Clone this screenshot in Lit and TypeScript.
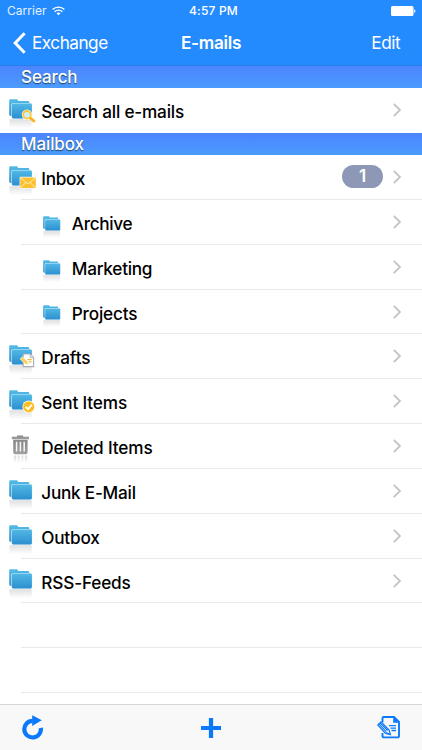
import { LitElement, html, svg, css, nothing } from "lit";
import { customElement, property } from "lit/decorators.js";

type Badge = "search" | "mail" | "draft" | "check" | "none";
type Icon = Badge | "trash";
interface Item { label: string; icon: Icon; sub?: boolean; count?: number; spacing: number; }

const search: Item[] = [{ label: "Search all e-mails", icon: "search", spacing: -0.2 }];
const mailbox: Item[] = [
  { label: "Inbox", icon: "mail", count: 1, spacing: -0.3 },
  { label: "Archive", icon: "none", sub: true, spacing: -0.33 },
  { label: "Marketing", icon: "none", sub: true, spacing: -0.27 },
  { label: "Projects", icon: "none", sub: true, spacing: -0.2 },
  { label: "Drafts", icon: "draft", spacing: -0.06 },
  { label: "Sent Items", icon: "check", spacing: -0.15 },
  { label: "Deleted Items", icon: "trash", spacing: -0.15 },
  { label: "Junk E-Mail", icon: "none", spacing: -0.25 },
  { label: "Outbox", icon: "none", spacing: -0.22 },
  { label: "RSS-Feeds", icon: "none", spacing: -0.17 },
];

const badges: Record<Badge, unknown> = {
  none: nothing,
  search: svg`
    <path d="M21 18.2 25 22" stroke="#fff" stroke-width="4.2" stroke-linecap="round"/>
    <circle cx="18" cy="15.8" r="5.2" fill="#fff"/>
    <path d="M21.2 18.8 24.8 22" stroke="#f6b421" stroke-width="3" stroke-linecap="round"/>
    <circle cx="18" cy="15.8" r="3.8" fill="#d3eef8" stroke="#fbc938" stroke-width="1.8"/>`,
  mail: svg`
    <rect x="10.6" y="10.8" width="16.6" height="11.6" rx="1.2" fill="#fff"/>
    <rect x="11.2" y="11.5" width="15.6" height="10.4" rx="1" fill="#fcbf2d"/>
    <path d="M11.8 12.2 19 17.8 26.2 12.2M11.8 21.4 17 16.5M26.2 21.4 21 16.5" fill="none" stroke="#fff3cf" stroke-width=".9"/>`,
  draft: svg`
    <path d="M14.2 9h7l3.4 3.4v9.2h-10.4z" fill="#fff" stroke="#a9adb2" stroke-width="1.1"/>
    <path d="M21.2 9.2v3.4h3.2" fill="#e5e5e5" stroke="#a9adb2" stroke-width=".8"/>
    <path d="M11 14 13.6 11.6 18.8 16.8 19.4 19.8 16.2 19z" fill="#fbd064" stroke="#fff" stroke-width=".5"/>
    <path d="M18.4 14.6h4.4M19.8 16.9h2.6" stroke="#f4b942" stroke-width="1.3"/>`,
  check: svg`
    <circle cx="19.7" cy="16.8" r="6.3" fill="#fff"/>
    <circle cx="19.7" cy="16.8" r="5.6" fill="#fdbf24"/>
    <path d="M16.7 17 19.1 19.2 22.9 14.7" fill="none" stroke="#fff" stroke-width="1.8"/>`,
};

@customElement("mail-icon")
class MailIcon extends LitElement {
  @property() kind: Icon = "none";
  @property({ type: Boolean }) small = false;
  static styles = css`
    :host { display: block; }
    svg { display: block; overflow: visible; }
  `;
  render() {
    if (this.kind === "trash") return html`
      <svg width="24" height="30" viewBox="0 0 24 30">
        <defs>
          <linearGradient id="m" x1="0" y1="0" x2="0" y2="1"><stop stop-color="#888"/><stop offset="1" stop-color="#a0a0a0"/></linearGradient>
          <linearGradient id="r" x1="0" y1="0" x2="0" y2="1"><stop stop-color="#dadada"/><stop offset="1" stop-color="#fff"/></linearGradient>
        </defs>
        <path d="M8 .6h6.2v1.2H20v2.4H2.8V1.8H8z" fill="url(#m)"/>
        <path d="M4.2 4.8h14.4v12.6a1.8 1.8 0 0 1-1.8 1.8H6a1.8 1.8 0 0 1-1.8-1.8z" fill="url(#m)"/>
        <path d="M7.6 6.8v9.7M11.4 6.8v9.7M15.2 6.8v9.7" stroke="#f7f7f7" stroke-width="1.5"/>
        <path d="M4.8 20.5h2.4v8H4.8zM8.7 20.5h1.9v8H8.7zM12.4 20.5h1.9v8h-1.9zM15.9 20.5h2.3v8h-2.3z" fill="url(#r)"/>
      </svg>`;
    return html`
      <svg width=${this.small ? 18 : 24} height=${this.small ? 22.5 : 30} viewBox="0 0 24 30">
        <defs>
          <linearGradient id="b" x1="0" y1="0" x2="0" y2="1"><stop stop-color="#55bbe6"/><stop offset="1" stop-color="#2f94cf"/></linearGradient>
          <linearGradient id="f" x1="0" y1="0" x2="0" y2="1"><stop stop-color="#51b8e6"/><stop offset="1" stop-color="#2d8fcf"/></linearGradient>
          <linearGradient id="r" x1="0" y1="0" x2="0" y2="1"><stop stop-color="#dedfe1"/><stop offset="1" stop-color="#fff"/></linearGradient>
        </defs>
        <path d="M.4 20.2h22.4v9H.4z" fill="url(#r)"/>
        <path d="M.2 1.2A1 1 0 0 1 1.2.2h6.8l1.4 1.7h9.8a1 1 0 0 1 1 1v14H1.8a1.6 1.6 0 0 1-1.6-1.6z" fill="url(#b)"/>
        <rect x="2.3" y="3.9" width="21" height="15.9" rx="1.8" fill="#d9f1fa"/>
        <rect x="2.9" y="4.6" width="20" height="14.8" rx="1.3" fill="url(#f)"/>
        ${badges[this.kind]}
      </svg>`;
  }
}

@customElement("app-root")
class AppRoot extends LitElement {
  static styles = css`
    :host { display: flex; flex-direction: column; width: 422px; height: 750px; overflow: hidden;
      background: #fff; font-family: Inter, "Liberation Sans", sans-serif; color: #000; }
    svg { display: block; flex: none; }
    header { flex: none; height: 65.5px; background: #248bff; color: #fff; box-sizing: border-box; border-bottom: 1px solid #287fe9; }
    .status, .nav { display: grid; grid-template-columns: 1fr auto 1fr; align-items: center; }
    .status { height: 21px; padding: 1px 6px 0 7px; box-sizing: border-box; font-size: 12px; line-height: 20px; }
    .carrier { display: flex; align-items: center; gap: 5px; letter-spacing: .05px; color: #e4f1ff; }
    .time { font-weight: 550; letter-spacing: .2px; margin-left: 4px; }
    .battery { justify-self: end; }
    .nav { height: 43px; padding: 0 22px 0 13px; font-size: 17.2px; letter-spacing: -.5px; }
    .back { display: flex; align-items: center; gap: 6px; }
    .title { font-weight: 600; letter-spacing: -.3px; margin-left: 9px; }
    .edit { justify-self: end; }
    .section { flex: none; height: 22.4px; box-sizing: border-box; padding-left: 21px; line-height: 23.6px; color: #fff; font-size: 17px;
      font-weight: 500; letter-spacing: -.1px; background: linear-gradient(#4c84ff, #4b9bfe); text-shadow: 0 1px 1px #245; }
    .row { flex: none; height: 44.83px; box-sizing: border-box; display: flex; position: relative; padding: 0 21px 0 9px; }
    .line::after { content: ""; position: absolute; left: 21px; right: 0; bottom: 0; height: 1px; background: #e9e9eb; }
    .sub { padding-left: 42.5px; }
    .icon { width: 32.3px; padding-top: 10.9px; flex: none; }
    .sub .icon { width: 29.3px; padding-top: 15.6px; }
    .label { flex: 1; font-size: 17.2px; font-weight: 550; line-height: 48px; }
    .chev { margin-top: 15px; }
    .count { width: 41px; height: 23px; border-radius: 12px; background: #8c98b5; color: #fff; font-weight: 600; font-size: 17px;
      line-height: 23px; text-align: center; margin: 9.8px 10px 0 0; }
    .list { flex: 1; min-height: 0; overflow: hidden; display: flex; flex-direction: column; }
    footer { flex: none; height: 46px; box-sizing: border-box; border-top: 1px solid #d6d6d7; background: #f8f8f8;
      display: grid; grid-template-columns: 1fr auto 1fr; align-items: center; padding: 0 21px; }
    .compose { justify-self: end; }
  `;

  private row(i: Item) {
    return html`<div class="row ${i.icon === "search" ? "" : "line"} ${i.sub ? "sub" : ""}">
      <div class="icon"><mail-icon .kind=${i.icon} .small=${!!i.sub}></mail-icon></div>
      <div class="label" style="letter-spacing:${i.spacing}px">${i.label}</div>
      ${i.count ? html`<div class="count">${i.count}</div>` : nothing}
      <svg class="chev" width="8" height="14" viewBox="0 0 8 14"><path d="M.8.8 7 7 .8 13.2" fill="none" stroke="#c3c3c8" stroke-width="1.8"/></svg>
    </div>`;
  }

  render() {
    return html`
      <header>
        <div class="status">
          <div class="carrier"><span>Carrier</span>
            <svg width="13" height="10" viewBox="0 0 13 10" fill="none" stroke="#fff" stroke-width="1.4"><path d="M.6 3.5a8.4 8.4 0 0 1 11.8 0M2.7 5.7a5.4 5.4 0 0 1 7.6 0"/><path d="M4.5 7.3a3 3 0 0 1 4 0L6.5 9.3z" fill="#fff" stroke="none"/></svg>
          </div>
          <div class="time">4:57 PM</div>
          <svg class="battery" width="25" height="10" viewBox="0 0 25 10" fill="#fff"><rect width="22.5" height="10" rx="1.6"/><path d="M23.2 3.2c1.7.4 1.7 3.2 0 3.6z"/></svg>
        </div>
        <div class="nav">
          <div class="back"><svg width="13" height="22" viewBox="0 0 13 22"><path d="M11.6 1.3 2.2 11l9.4 9.7" fill="none" stroke="#fff" stroke-width="3"/></svg><span>Exchange</span></div>
          <div class="title">E-mails</div>
          <div class="edit">Edit</div>
        </div>
      </header>
      <div class="list">
        <div class="section">Search</div>
        ${search.map((i) => this.row(i))}
        <div class="section">Mailbox</div>
        ${mailbox.map((i) => this.row(i))}
        <div class="row line"></div>
        <div class="row line"></div>
      </div>
      <footer>
        <svg width="22" height="25" viewBox="0 0 22 25"><path d="M19.2 12.9A8.3 8.3 0 1 1 11 5.9" fill="none" stroke="#0b79fb" stroke-width="4.2" transform="translate(.6 0)"/><path d="M11.2.2 20.8 5.3 11.2 10.9z" fill="#0b79fb"/></svg>
        <svg width="20" height="20" viewBox="0 0 20 20"><path d="M7.9 0h4.2v7.9H20v4.2h-7.9V20H7.9v-7.9H0V7.9h7.9z" fill="#0b79fb"/></svg>
        <svg class="compose" width="24" height="23" viewBox="0 0 24 23">
          <path d="M5.5 6.5V2.2A1.2 1.2 0 0 1 6.7 1H17l5 5v14a1.4 1.4 0 0 1-1.4 1.4H6.9a1.4 1.4 0 0 1-1.4-1.4v-3" fill="none" stroke="#0b79fb" stroke-width="1.9"/>
          <path d="M16.2 1v5.8H22z" fill="#0b79fb"/>
          <path d="M12 9.7h7M13.5 12.2H19M14.5 14.5H19" stroke="#0b79fb" stroke-width="1.3"/>
          <path d="M.8 9 4 5.8l8.2 8.3 1.2 4.6-4.8-1.2z" fill="#f8f8f8" stroke="#0b79fb" stroke-width="1.2"/>
          <path d="M2 8.2 9.2 15.6M3.2 7 10.7 14.5M9 16.6l4.2 2" stroke="#0b79fb" stroke-width="1.1"/>
        </svg>
      </footer>`;
  }
}
